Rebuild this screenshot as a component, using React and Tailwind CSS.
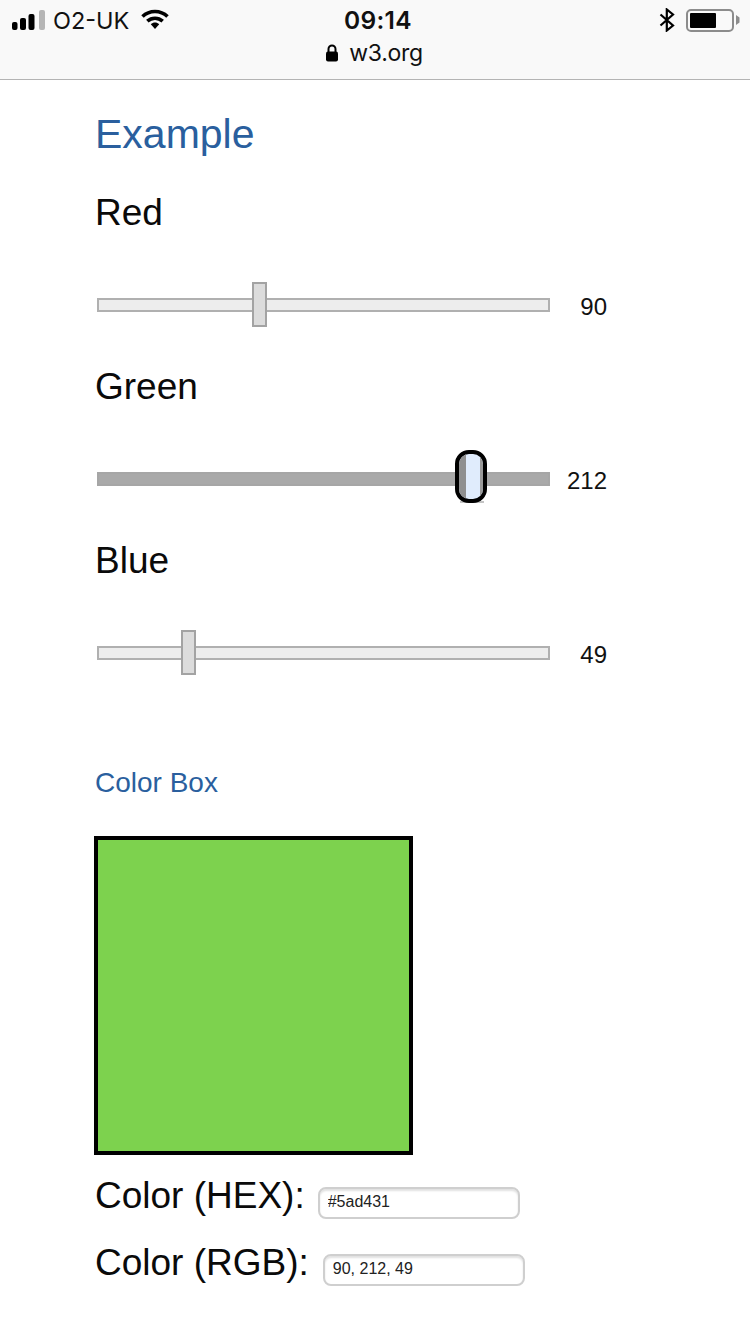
const sliders = [
  { label: "Red", value: 90, thumb: 155 },
  { label: "Green", value: 212, thumb: 364, focused: true },
  { label: "Blue", value: 49, thumb: 84 },
]

const StatusBar = () => (
  <header className="h-[80px] border-b border-[#b4b4b4] bg-[#f9f9f9] font-['Inter',sans-serif] text-black">
    <div className="grid h-[40px] grid-cols-[1fr_auto_1fr] items-center">
      <div className="flex items-center pl-3">
        <svg width="34" height="22" viewBox="0 0 34 22" className="mt-[-1px]">
          <rect x="0" y="13" width="5.5" height="8" rx="2" fill="#000" />
          <rect x="8" y="9" width="6" height="12" rx="2" fill="#000" />
          <rect x="16.5" y="5" width="6" height="16" rx="2" fill="#000" />
          <rect x="27" y="1" width="6" height="20" rx="2" fill="#b5b5b5" />
        </svg>
        <span className="ml-[7px] mt-[1px] text-[23.5px] leading-none text-[#111]">O2-UK</span>
        <svg width="28" height="20" viewBox="0 0 28 20" className="ml-[12px] mt-[-2px]">
          <path d="M1.5 7.5C8.5 .8 19.5 .8 26.5 7.5" fill="none" stroke="#000" strokeWidth="3.6" />
          <path d="M6.3 12.2C10.8 8.2 17.2 8.2 21.7 12.2" fill="none" stroke="#000" strokeWidth="3.6" />
          <path d="M9.8 15.2C12.2 13 15.8 13 18.2 15.2L14 20Z" fill="#000" />
        </svg>
      </div>
      <div className="ml-[6px] text-[24.5px] font-semibold leading-none tracking-[0.3px] text-[#111]">09:14</div>
      <div className="flex items-center justify-end pr-[10px]">
        <svg width="16" height="24" viewBox="0 0 16 24" fill="none" stroke="#000" strokeWidth="2.2">
          <path d="M1.5 6.5L14 17.5L7.8 22.5V1.5L14 6.5L1.5 17.5" />
        </svg>
        <div className="ml-[11px] flex h-[23px] w-[48px] items-center rounded-[5px] border-[2px] border-[#8c8c8c] pl-[2px]">
          <div className="h-[15px] w-[26px] rounded-[1px] bg-black" />
        </div>
        <svg width="4" height="10" viewBox="0 0 4 10" className="ml-[2px]">
          <path d="M0 0L3.5 2.5V7.5L0 10Z" fill="#8c8c8c" />
        </svg>
      </div>
    </div>
    <div className="flex h-[26px] items-center justify-center pr-[2px]">
      <svg width="14" height="18" viewBox="0 0 14 18">
        <path d="M3.5 8V5a3.5 3.5 0 0 1 7 0v3" fill="none" stroke="#000" strokeWidth="2" />
        <rect x="1" y="7.5" width="12" height="10" rx="2" fill="#000" />
      </svg>
      <span className="ml-[10px] text-[23px] leading-none tracking-[-0.3px] text-[#111]">w3.org</span>
    </div>
  </header>
)

const Slider = ({ label, value, thumb, focused }) => (
  <section>
    <h3 className="h-[40px] text-[37px] leading-[40px] text-[#0a0a0a]">{label}</h3>
    <div className="mt-[60px] flex h-[24px] items-center">
      <div
        className={`relative ml-[2px] h-[14px] w-[454px] border-2 ${
          focused ? "border-[#a6a6a6] bg-[#a9a9a9]" : "border-[#b0b0b0] bg-[#ededed]"
        }`}
      >
        {focused ? (
          <>
            <div className="absolute top-[-20px] h-[49px] w-[24px] border-b-2 border-[#c4c4c4]" style={{ left: thumb - 3 }} />
            <div className="absolute top-[-24px] flex h-[53px] w-[32px] overflow-hidden rounded-[14px] border-[4px] border-black bg-[#e0ecfc]" style={{ left: thumb - 8 }}>
              <div className="h-full w-[7px] bg-[#8f8f8f]" />
              <div className="ml-auto h-full w-[3px] bg-[#9a9a9a]" />
            </div>
          </>
        ) : (
          <div className="absolute top-[-18px] h-[45px] w-[15px] border-2 border-[#a3a3a3] bg-[#dcdcdc]" style={{ left: thumb - 2 }} />
        )}
      </div>
      <output className="ml-auto mt-[4px] w-[57px] text-right text-[24px] leading-none text-[#111]">{value}</output>
    </div>
  </section>
)

const ColorField = ({ label, value, gap }) => (
  <div className="flex h-[40px] items-center">
    <label className="text-[37px] leading-[40px] text-[#0a0a0a]">{label}</label>
    <input
      readOnly
      value={value}
      className={`${gap} mt-[14px] h-[32px] w-[202px] rounded-[8px] border-2 border-[#cfcfcf] bg-white px-[8px] pb-[2px] text-[16px] text-[#222] shadow-[inset_0_2px_2px_rgba(0,0,0,0.12)] outline-none`}
    />
  </div>
)

const App = () => (
  <div className="h-[1334px] w-[750px] overflow-hidden bg-white font-['Liberation_Sans',Arial,sans-serif]">
    <StatusBar />
    <main className="pl-[95px] pr-[143px]">
      <h2 className="mt-[30px] h-[48px] text-[41px] leading-[48px] text-[#2a5f9e]">Example</h2>
      <div className="mt-[35px] flex flex-col gap-[50px]">
        {sliders.map((s) => (
          <Slider key={s.label} {...s} />
        ))}
      </div>
      <h3 className="mt-[102px] h-[32px] text-[28px] leading-[32px] text-[#2a5f9e]">Color Box</h3>
      <div className="ml-[-1px] mt-[37px] h-[319px] w-[319px] border-[4px] border-black bg-[#7dd24e]" />
      <div className="mt-[21px] flex flex-col gap-[27px]">
        <ColorField label="Color (HEX):" value="#5ad431" gap="ml-[13px]" />
        <ColorField label="Color (RGB):" value="90, 212, 49" gap="ml-[14px]" />
      </div>
    </main>
  </div>
)

export default App
